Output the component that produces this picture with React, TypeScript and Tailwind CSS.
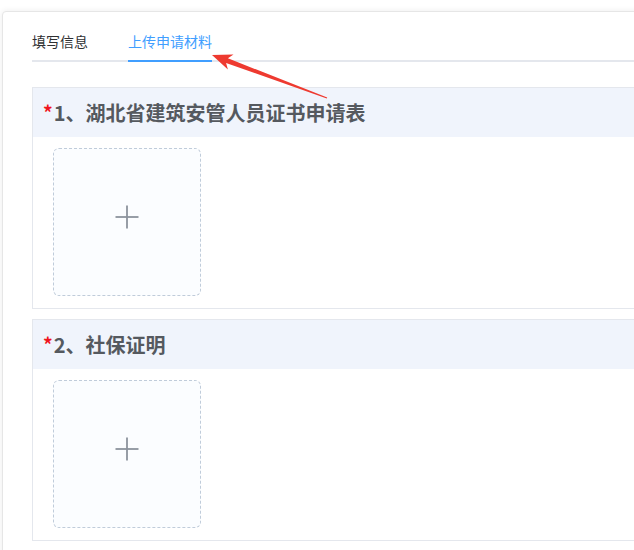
import React from "react";

function Section({ title }: { title: string }) {
  return (
    <div className="border border-[#e4e7ed] bg-white">
      <div className="h-[49px] bg-[#f0f4fc] flex items-center pl-[10px] text-[20px] font-bold text-[#55595f] leading-none">
        <span className="text-[#f0141e] font-bold text-[19px] mr-[1px] relative top-[-1px]">*</span>
        <span>{title}</span>
      </div>
      <div className="pt-[11px] pb-[12px] pl-[20px]">
        <div className="w-[148px] h-[148px] border border-dashed border-[#c0ccda] rounded-[6px] bg-[#fbfdff] flex items-center justify-center">
          <svg className="relative top-[-5px]" width="24" height="24" viewBox="0 0 24 24">
            <line x1="0.5" y1="12" x2="23.5" y2="12" stroke="#8c939d" strokeWidth="1.8" />
            <line x1="12" y1="0.5" x2="12" y2="23.5" stroke="#8c939d" strokeWidth="1.8" />
          </svg>
        </div>
      </div>
    </div>
  );
}

export default function App() {
  return (
    <div
      className="relative w-[634px] h-[550px] overflow-hidden bg-white"
      style={{ fontFamily: '"Noto Sans CJK SC", "Microsoft YaHei", sans-serif' }}
    >
      <div className="ml-[2px] mt-[11px] w-[720px] h-[600px] bg-white border border-[#e6e6e6] rounded-[4px] shadow-[0_0_6px_rgba(0,0,0,0.08)] pl-[29px] pt-[10px]">
        <div className="flex h-[40px] border-b-2 border-[#e4e7ed] items-stretch">
          <div className="flex items-center text-[14px] text-[#303133] pr-[20px]">填写信息</div>
          <div className="relative flex items-center text-[14px] text-[#409eff] mx-[20px]">
            上传申请材料
            <div className="absolute left-0 right-0 bottom-[-2px] h-[2px] bg-[#409eff]" />
          </div>
        </div>
        <div className="mt-[25px] flex flex-col gap-[10px]">
          <Section title="1、湖北省建筑安管人员证书申请表" />
          <Section title="2、社保证明" />
        </div>
      </div>
      <svg className="absolute left-0 top-0 pointer-events-none" width="634" height="550">
        <polygon
          points="212,55 233.5,54.5 227.9,58.3 327.2,97.5 326.8,98.5 226.1,62.9 227.9,69.5"
          fill="#ee3a30"
        />
      </svg>
    </div>
  );
}
